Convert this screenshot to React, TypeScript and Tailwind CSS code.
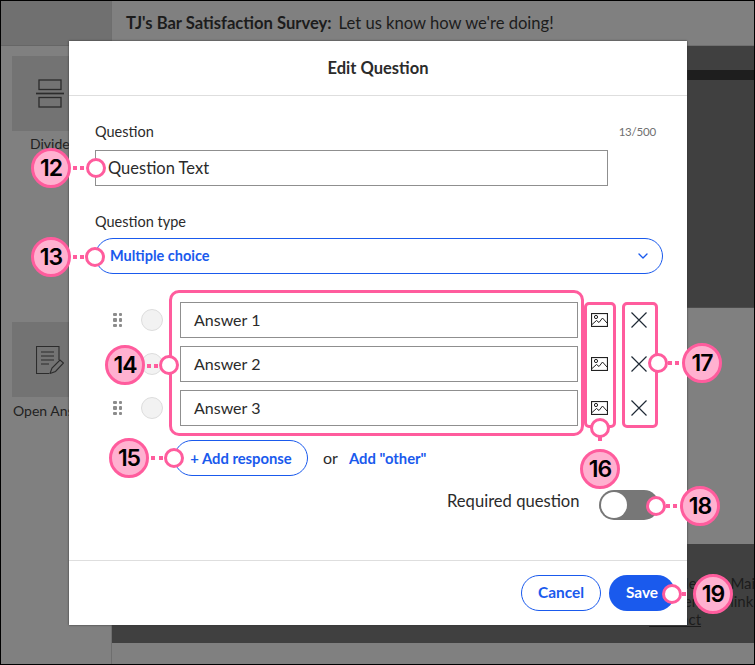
import { ChevronDown } from "lucide-react";

const font = "font-['Lato','Noto_Sans',sans-serif]";

function ImageIcon() {
  return (
    <svg width="17" height="14" viewBox="0 0 17 14" fill="none" stroke="#222" strokeWidth="1">
      <rect x="0.5" y="0.5" width="16" height="13" strokeWidth="1.2" />
      <circle cx="5" cy="4" r="1.6" />
      <path d="M1 11.5 L5.5 7.5 L8 9.5 L11.5 5 L16 10" />
    </svg>
  );
}

function XIcon() {
  return (
    <svg width="16" height="16" viewBox="0 0 16 16" fill="none" stroke="#1f2a36" strokeWidth="1.2">
      <path d="M0.5 0.5 L15.5 15.5 M15.5 0.5 L0.5 15.5" />
    </svg>
  );
}

function Grip() {
  return (
    <div className="grid grid-cols-2 gap-x-[2px] gap-y-[2px] w-[9px]">
      {[0, 1, 2, 3, 4, 5].map((i) => (
        <span key={i} className="w-[3.5px] h-[3.5px] rounded-[1px] bg-[#8c8c8c]" />
      ))}
    </div>
  );
}

function AnswerRow({ label }: { label: string }) {
  return (
    <div className="flex items-center h-[36px]">
      <div className="w-[9px] ml-[18px]">
        <Grip />
      </div>
      <div className="w-[22px] h-[22px] ml-[19px] rounded-full bg-[#f2f2f2] border border-[#dddddd]" />
      <div className="ml-[17px] w-[398px] h-[36px] border border-[#8f8f8f] flex items-center pl-[13px] text-[16px] text-[#2b2b2b]">
        {label}
      </div>
      <div className="ml-[13px] w-[17px] flex justify-center">
        <ImageIcon />
      </div>
      <div className="ml-[23px] w-[16px] flex justify-center">
        <XIcon />
      </div>
    </div>
  );
}

function Badge({ n, className }: { n: string; className: string }) {
  return (
    <div
      className={`absolute w-[40px] h-[40px] rounded-full bg-[#ffb1d0] border-[3px] border-[#ff5c9d] flex items-center justify-center text-[23px] font-semibold tracking-[-1px] text-black font-['Inter',sans-serif] ${className}`}
    >
      {n}
    </div>
  );
}

function Handle({ className }: { className: string }) {
  return <div className={`absolute w-[20px] h-[20px] rounded-full bg-white border-[3px] border-[#ff5c9d] ${className}`} />;
}

function Dot({ className }: { className: string }) {
  return <div className={`absolute w-[4px] h-[4px] bg-[#ff5c9d] ${className}`} />;
}

export default function App() {
  return (
    <div className={`relative w-[755px] h-[665px] overflow-hidden border border-black bg-[#808080] flex ${font}`}>
      {/* page behind the dialog */}
      <aside className="w-[111px] shrink-0 border-r border-[#6e6e6e] flex flex-col">
        <div className="h-[45px] bg-[#707070] border-b border-[#666666] shrink-0" />
        <div className="pl-[11px] pt-[10px]">
          <div className="w-[76px] h-[75px] bg-[#737373] flex items-center justify-center">
            <svg width="28" height="29" viewBox="0 0 28 29" fill="none" stroke="#2c2c2c" strokeWidth="1.3">
              <rect x="3" y="1" width="22" height="9.5" />
              <rect x="3" y="18.5" width="22" height="9.5" />
              <path d="M0 14.5 H28" strokeWidth="1.7" />
            </svg>
          </div>
          <div className="mt-[4px] h-[18px] text-[14px] leading-[18px] text-[#222] pl-[18px]">Divider</div>
          <div className="mt-[169px] w-[76px] h-[75px] bg-[#737373] flex items-center justify-center">
            <svg width="28" height="28" viewBox="0 0 28 28" fill="none" stroke="#2c2c2c" strokeWidth="1.1">
              <path d="M23 14 V0.5 H0.5 V27.5 H13" />
              <path d="M5 6 H18 M5 10 H18 M5 14 H18 M5 18 H13" />
              <path d="M14 27.5 L16 22 L24 14 L27.5 17 L19.5 25.5 Z" />
            </svg>
          </div>
          <div className="mt-[5px] pl-[1px] text-[14px] leading-[18px] text-[#222] whitespace-nowrap">Open Answer</div>
        </div>
      </aside>
      <main className="flex-1 flex flex-col min-w-0">
        <header className="h-[45px] pt-[1px] shrink-0 border-b border-[#707070] flex items-center pl-[14px] text-[16.6px] text-[#1c1c1c] whitespace-nowrap">
          <span className="font-bold mr-[7px]">TJ's Bar Satisfaction Survey:</span>
          <span>Let us know how we're doing!</span>
        </header>
        <div className="h-[24px] bg-[#404040] shrink-0" />
        <div className="h-[10px] bg-[#1e1e1e] shrink-0" />
        <div className="h-[228px] bg-[#404040] border-b border-[#4c4c4c] shrink-0" />
        <div className="h-[236px] shrink-0" />
        <div className="h-[99px] bg-[#404040] shrink-0 pl-[537px] pt-[30px] text-[15px] leading-[18px] text-[#1c1c1c] whitespace-nowrap">
          <div>Sample text Mail</div>
          <div>Reference a link</div>
          <div className="underline">Contact</div>
        </div>
      </main>

      {/* dialog */}
      <div className="absolute left-[68px] top-[40px] w-[618px] h-[584px] bg-white flex flex-col shadow-[0_0_2px_#333] text-[#2b2b2b]">
        <div className="h-[55px] pt-[1px] shrink-0 border-b border-[#dedede] flex items-center justify-center text-[16.5px] font-bold">
          Edit Question
        </div>
        <div className="flex-1 pl-[26px] pt-[27px] flex flex-col">
          <div className="flex justify-between items-center h-[18px] pr-[31px]">
            <span className="text-[14.5px]">Question</span>
            <span className="text-[11.5px] tracking-[-0.2px] text-[#707070]">13/500</span>
          </div>
          <div className="mt-[9px] w-[513px] h-[36px] border border-[#8f8f8f] flex items-center pl-[12px] text-[16.5px]">
            Question Text
          </div>
          <div className="mt-[27px] h-[18px] text-[14.5px] flex items-center">Question type</div>
          <div className="mt-[7px] w-[568px] h-[36px] rounded-full border border-[#1a5aed] flex items-center justify-between pl-[14px] pr-[11px] text-[14.5px] font-bold text-[#1a5aed]">
            Multiple choice
            <ChevronDown size={16} strokeWidth={2} />
          </div>
          <div className="mt-[28px] flex flex-col gap-[8px]">
            <AnswerRow label="Answer 1" />
            <AnswerRow label="Answer 2" />
            <AnswerRow label="Answer 3" />
          </div>
          <div className="mt-[14px] flex items-center pl-[79px]">
            <div className="w-[134px] h-[36px] rounded-full border border-[#1a5aed] flex items-center justify-center text-[14.8px] font-bold text-[#1a5aed]">
              + Add response
            </div>
            <span className="ml-[15px] text-[16px]">or</span>
            <span className="ml-[11px] text-[14.8px] font-bold text-[#1a5aed]">Add "other"</span>
          </div>
          <div className="mt-[14px] flex items-start pl-[352px]">
            <span className="w-[152px] text-[16.6px] leading-[22px]">Required question</span>
            <div className="w-[60px] h-[30px] rounded-full bg-[#777777] p-[2px]">
              <div className="w-[26px] h-[26px] rounded-full bg-white" />
            </div>
          </div>
        </div>
        <div className="h-[65px] shrink-0 border-t border-[#dedede] flex items-center justify-end gap-[8px] pr-[12px]">
          <div className="w-[80px] h-[36px] rounded-full border border-[#1a5aed] flex items-center justify-center text-[15.4px] font-bold text-[#1a5aed]">
            Cancel
          </div>
          <div className="w-[66px] h-[36px] rounded-full bg-[#1a5aed] flex items-center justify-center text-[15.4px] font-bold text-white">
            Save
          </div>
        </div>
      </div>

      {/* annotations */}
      <div className="absolute left-[168px] top-[289px] w-[415px] h-[146px] rounded-[10px] border-[3px] border-[#ff5c9d]" />
      <div className="absolute left-[583px] top-[301px] w-[32px] h-[126px] rounded-[5px] border-[3px] border-[#ff5c9d]" />
      <div className="absolute left-[621px] top-[301px] w-[36px] h-[126px] rounded-[5px] border-[3px] border-[#ff5c9d]" />

      <Badge n="12" className="left-[30px] top-[147px]" />
      <Dot className="left-[72px] top-[165px]" />
      <Dot className="left-[79px] top-[165px]" />
      <Handle className="left-[85px] top-[157px]" />

      <Badge n="13" className="left-[30px] top-[236px]" />
      <Dot className="left-[72px] top-[254px]" />
      <Dot className="left-[79px] top-[254px]" />
      <Handle className="left-[84px] top-[246px]" />

      <Badge n="14" className="left-[104px] top-[344px]" />
      <Dot className="left-[146px] top-[363px]" />
      <Dot className="left-[153px] top-[363px]" />
      <Handle className="left-[158px] top-[354px]" />

      <Badge n="15" className="left-[108px] top-[437px]" />
      <Dot className="left-[150px] top-[455px]" />
      <Dot className="left-[158px] top-[455px]" />
      <Handle className="left-[163px] top-[447px]" />

      <Handle className="left-[589px] top-[417px]" />
      <Dot className="left-[597px] top-[436px]" />
      <Badge n="16" className="left-[579px] top-[448px]" />

      <Handle className="left-[647px] top-[352px]" />
      <Dot className="left-[667px] top-[360px]" />
      <Dot className="left-[674px] top-[360px]" />
      <Badge n="17" className="left-[681px] top-[342px]" />

      <Handle className="left-[645px] top-[495px]" />
      <Dot className="left-[665px] top-[503px]" />
      <Dot className="left-[672px] top-[503px]" />
      <Badge n="18" className="left-[679px] top-[485px]" />

      <Handle className="left-[661px] top-[583px]" />
      <Dot className="left-[681px] top-[591px]" />
      <Badge n="19" className="left-[692px] top-[573px]" />
    </div>
  );
}
